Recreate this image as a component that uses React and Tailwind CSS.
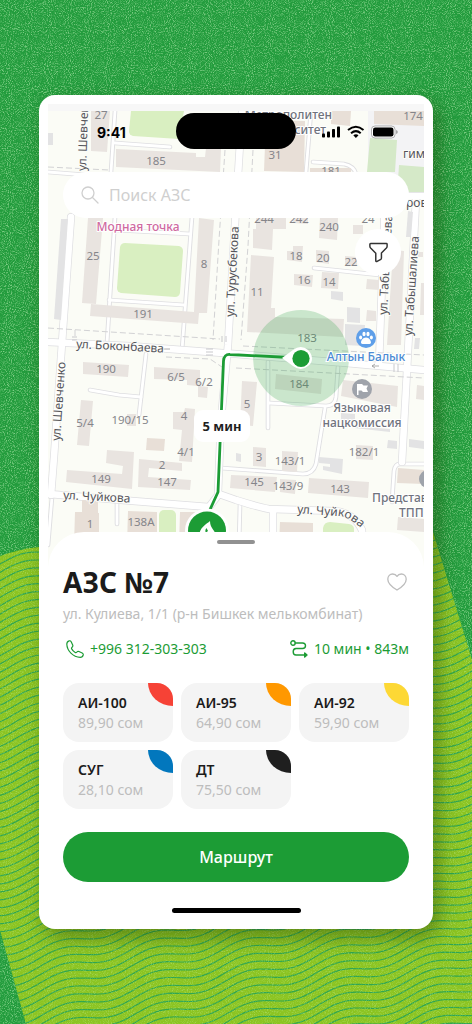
import React from "react";

const fuels = [
  { name: "АИ-100", price: "89,90 сом", color: "bg-[#f64236]" },
  { name: "АИ-95", price: "64,90 сом", color: "bg-[#ff9800]" },
  { name: "АИ-92", price: "59,90 сом", color: "bg-[#fdd835]" },
  { name: "СУГ", price: "28,10 сом", color: "bg-[#0277bd]" },
  { name: "ДТ", price: "75,50 сом", color: "bg-[#1f1f1f]" },
];

// Wavy contour lines of the lime backdrop.
function wave(offset) {
  let d = "";
  for (let x = -4; x <= 476; x += 4) {
    const base = offset - 0.27 * x;
    const shift = 83 + (base - 940) * 0.1;
    const y = base + 4.4 * Math.sin((2 * Math.PI * (x - shift)) / 92);
    d += (x === -4 ? "M" : "L") + x + " " + y.toFixed(1);
  }
  return d;
}
const waves = Array.from({ length: 78 }, (_, i) => wave(548 + i * 8.1));

function Backdrop() {
  return (
    <svg
      className="absolute inset-0 h-full w-full"
      viewBox="0 0 472 1024"
      preserveAspectRatio="xMidYMid slice"
      aria-hidden="true"
    >
      <defs>
        <clipPath id="lime">
          <path d="M0 556Q20 549 39 547L433 532L472 660V1024H26L0 930Z" />
        </clipPath>
        <filter id="grain" x="0" y="0" width="100%" height="100%" colorInterpolationFilters="sRGB">
          <feTurbulence type="fractalNoise" baseFrequency="0.95" numOctaves="2" seed="4" />
          <feColorMatrix values="0 0 0 0 0.85  0 0 0 0 1  0 0 0 0 0.8  3 0 0 0 -1.4" />
        </filter>
      </defs>
      <rect width="472" height="1024" fill="#239c3d" />
      <rect width="472" height="1024" filter="url(#grain)" opacity="0.5" />
      <g clipPath="url(#lime)">
        <rect y="520" width="472" height="504" fill="#8cc421" />
        <g fill="none" stroke="#2fa650" strokeWidth="1.2">
          {waves.map((d, i) => (
            <path key={i} d={d} />
          ))}
        </g>
        <rect y="520" width="472" height="504" filter="url(#grain)" opacity="0.28" />
      </g>
    </svg>
  );
}

const buildings = [
  "91,111 110,111 107,152 91,151",
  "116,149 196,153 196,157 205,157 206,148 221,149 220,172 116,167",
  "88,218 103,218 96,304 82,303",
  "91,304 194,312 199,218 214,220 207,313 199,313 198,324 90,316",
  "83,362 129,365 128,377 83,374",
  "154,367 200,370 200,386 208,387 207,398 198,397 198,386 187,385 187,380 154,379",
  "81,400 93,401 89,446 77,445",
  "127,414 136,414 136,426 127,426",
  "173,412 184,412 185,408 195,409 192,462 179,461 182,430 173,429",
  "107,450 134,452 132,489 66,482 67,470 122,474 123,466 106,463",
  "139,459 182,463 182,471 149,468 148,477 191,480 190,490 138,487",
  "256,218 286,218 286,229 273,229 272,250 253,248 253,229 256,229",
  "293,217 308,217 308,224 293,223",
  "320,217 338,218 337,240 319,238",
  "353,225 363,225 363,234 353,234",
  "293,246 303,246 302,262 287,260 287,251 293,251",
  "251,255 274,257 271,308 275,308 275,317 344,319 343,337 247,332",
  "316,250 329,251 329,264 316,262",
  "345,256 357,257 357,266 345,265",
  "294,274 313,275 312,287 294,285",
  "322,272 339,273 338,289 321,288",
  "367,279 379,280 379,290 366,289",
  "367,310 376,311 376,321 366,321",
  "393,250 404,251 401,345 387,345",
  "276,374 322,379 321,394 275,389",
  "343,380 398,386 397,407 341,396",
  "242,381 257,382 253,426 240,425",
  "356,445 373,446 373,460 356,459",
  "253,447 266,448 266,467 253,466",
  "282,451 298,452 297,472 282,471",
  "231,475 277,477 275,492 230,488",
  "280,479 296,480 295,494 280,492",
  "309,478 369,482 368,498 308,493",
  "398,517 424,519 424,532 397,530",
  "417,385 424,386 424,400 416,399",
  "421,283 424,283 424,315 420,315",
  "418,252 423,252 423,257 418,257",
];
const warmBuildings = [
  "331,111 351,111 350,126 331,124",
  "266,120 305,121 304,172 264,171",
  "374,111 424,111 424,126 374,124",
  "147,438 165,439 164,451 146,450",
  "82,500 98,501 98,513 99,513 99,545 74,545 75,512 82,512",
  "128,511 157,512 157,545 127,545",
  "180,512 195,512 195,545 179,545",
  "310,168 351,168 351,175 310,175",
  "398,468 424,470 424,484 397,483",
  "280,522 313,523 313,545 279,545",
];
const grayBuildings = [
  "48,133 53,133 53,145 48,145",
  "61,219 68,219 61,320 54,319",
  "331,291 343,292 343,301 331,299",
  "347,307 360,308 360,323 347,322",
  "345,324 365,325 364,346 345,345",
  "341,413 355,414 355,422 341,421",
  "354,426 390,429 390,432 354,428",
  "388,440 397,441 397,449 387,448",
  "409,439 424,441 424,449 409,447",
  "319,457 343,459 342,474 323,470 323,466 330,467 330,464 319,463",
  "408,211 413,212 411,237 406,237",
  "415,338 420,338 419,349 414,349",
  "236,453 241,454 241,462 236,461",
];
const minorRoads = [
  "M115 111L111 172",
  "M115 143L170 147",
  "M48 172L112 177",
  "M115 217L107 343",
  "M192 217L182 350",
  "M109 300L184 305",
  "M116 230L190 234",
  "M146 354L139 415",
  "M90 390L119 395L141 397",
  "M117 503V524",
  "M311 111L306 172",
  "M313 162L344 164Q354 166 356 174",
  "M314 268L380 275",
  "M268 362V428",
  "M338 367L336 397Q335 406 326 406L269 403",
  "M325 408L316 464Q313 474 303 474L221 468",
  "M424 464H400Q395 464 394 471L392 502",
  "M240 505L239 545",
  "M52 497L48 545",
];
const majorRoads = [
  "M71 217L62 343L54 457L51 495",
  "M48 342L130 346L236 354L346 363L424 370",
  "M242 111L234 240L228 345L221 420L218 493",
  "M49 494L133 501L209 507L219 494L236 500Q258 507 269 509L335 511Q354 513 362 530L363 545",
  "M385 200L379 365",
  "M416 200L407 370L402 462",
  "M368 196H424",
  "M273 510V545",
];
const houseNumbers = [
  ["27", 101, 119], ["185", 156, 165], ["31", 275, 159], ["174", 413, 120], ["181", 331, 175],
  ["244", 264, 223], ["242", 299, 223], ["240", 329, 231], ["24", 368, 223],
  ["25", 93, 260], ["8", 204, 268], ["11", 257, 296], ["18", 296, 260], ["20", 323, 262],
  ["22", 351, 266], ["16", 304, 284], ["14", 329, 286], ["191", 143, 318], ["183", 307, 342],
  ["184", 299, 388], ["190", 106, 373], ["6/5", 176, 381], ["6/2", 204, 386], ["5/4", 85, 427],
  ["190/15", 130, 424], ["4", 184, 420], ["4/1", 186, 456], ["2", 162, 469], ["149", 101, 483],
  ["147", 167, 486], ["1", 90, 528], ["138А", 141, 526], ["5", 247, 408], ["3", 259, 461],
  ["143/1", 290, 465], ["182/1", 364, 456], ["145", 254, 486], ["143/9", 288, 490], ["143", 340, 493],
];
const streets = [
  ["ул. Шевченко", 86, 171, -88],
  ["ул. Шевченко", 60, 441, -86],
  ["ул. Турусбекова", 234, 317, -87],
  ["ул. Табышалиева", 387, 315, -87],
  ["ул. Табышалиева", 412, 336, -86],
  ["ул. Боконбаева", 76, 348, 3],
  ["ул. Чуйкова", 63, 499, 3],
];

function Roads({ paths, outer, inner }) {
  return (
    <g fill="none" strokeLinecap="round" strokeLinejoin="round">
      {paths.map((d) => (
        <path key={d} d={d} stroke="#dedee1" strokeWidth={outer} />
      ))}
      {paths.map((d) => (
        <path key={d} d={d} stroke="#fff" strokeWidth={inner} />
      ))}
    </g>
  );
}

function CityMap() {
  return (
    <svg
      className="absolute inset-0 h-full w-full"
      viewBox="48 111 376 456"
      preserveAspectRatio="xMidYMid slice"
      role="img"
      aria-label="Карта"
      fontFamily="'Noto Sans', sans-serif"
    >
      <rect x="-400" y="0" width="1300" height="700" fill="#fbfcf6" />
      <path d="M368 111H424V200H368Z" fill="#f3f3f5" />
      <path d="M131 111H184L179 139L133 136Q129 135 129 131Z" fill="#d9efc1" />
      <path d="M370 138L397 140L395 172H367Z" fill="#d5e9c8" />
      <path d="M399 165L424 167V193L404 192L398 180Z" fill="#d5e9c8" />
      <path d="M125 243L179 246Q183 247 183 251L180 293Q179 297 175 297L121 293Q117 292 117 288L120 247Q121 243 125 243Z" fill="#d9efc1" />
      <rect x="159" y="510" width="17" height="35" rx="5" fill="#d9efc1" />
      <path d="M323 545V528Q324 522 330 522L349 524Q355 525 354 531V545Z" fill="#d9efc1" />
      <Roads paths={minorRoads} outer={4.6} inner={2.8} />
      <Roads paths={majorRoads} outer={8} inner={6.6} />
      <g fill="#e9e4e0">{buildings.map((p) => <polygon key={p} points={p} />)}</g>
      <g fill="#e8dfd7">{warmBuildings.map((p) => <polygon key={p} points={p} />)}</g>
      <g fill="#e3e3e4">{grayBuildings.map((p) => <polygon key={p} points={p} />)}</g>
      <g fill="none" stroke="#d2d2d4" strokeWidth="1" strokeDasharray="6 3">
        <path d="M48 167L109 170M48 328L220 339M243 346L424 355M166 357L210 359L222 367M236 368L424 378" />
        <path d="M225 150L219 240L213 340M253 150L248 246L241 340M75 330V338" />
      </g>
      <g stroke="#c9c9cc" strokeWidth="1">
        <path d="M206 349H213M206 352H213M206 355H213M222 336V342M226 336V342M394 364V372M398 364V372M72 337H77M72 340H77" />
      </g>
      <path d="M372 366H379M372 366L375 364M372 366L375 368M170 349H163" stroke="#999" strokeWidth="0.8" fill="none" />

      <g fontSize="11.5" fill="#85858a" textAnchor="middle">
        {houseNumbers.map(([t, x, y]) => (
          <text key={t} x={x} y={y}>{t}</text>
        ))}
      </g>
      <g fontSize="12" fill="#55555b" stroke="#fcfcf8" strokeWidth="2" paintOrder="stroke" strokeLinejoin="round">
        {streets.map(([t, x, y, r]) => (
          <text key={x} transform={`translate(${x} ${y}) rotate(${r})`}>{t}</text>
        ))}
        <path id="chuikova" d="M297 513L338 516Q352 517 366 534" fill="none" stroke="none" />
        <text><textPath href="#chuikova">ул. Чуйкова</textPath></text>
        <text x="406" y="207">ров</text>
        <text x="403" y="158">гим</text>
      </g>
      <g fontSize="12" fontWeight="500" fill="#70737d" stroke="#fff" strokeWidth="2" paintOrder="stroke" strokeLinejoin="round">
        <text x="332" y="119" textAnchor="end">Метрополитен</text>
        <text x="326" y="134" textAnchor="end">университет</text>
        <text x="362" y="412" textAnchor="middle">Языковая</text>
        <text x="362" y="427" textAnchor="middle">нацкомиссия</text>
        <text x="372" y="502">Представ</text>
        <text x="399" y="517">ТПП</text>
        <text x="138" y="231" textAnchor="middle" fill="#cf6a9f">Модная точка</text>
      </g>

      <circle cx="301" cy="358" r="48" fill="#1c9c35" fillOpacity="0.22" />
      <text x="366" y="361" fontSize="12" fontWeight="500" textAnchor="middle" fill="#4c8bd3" stroke="#fff" strokeWidth="2" paintOrder="stroke">Алтын Балык</text>

      <circle cx="366" cy="338" r="10" fill="#5f9fe9" />
      <g fill="#fff">
        <path d="M366 337.5C363 337.5 361 340.5 361 342.5C361 344.5 363.5 344 366 344C368.500 344 371 344.500 371 342.500C371 340.500 369 337.500 366 337.500Z" />
        <ellipse cx="360.600" cy="337.600" rx="1.500" ry="2" />
        <ellipse cx="364" cy="334" rx="1.600" ry="2.200" />
        <ellipse cx="368" cy="334" rx="1.600" ry="2.200" />
        <ellipse cx="371.400" cy="337.600" rx="1.500" ry="2" />
      </g>
      <circle cx="362" cy="389" r="10" fill="#9fa3ab" />
      <path d="M357 384V395H358.500V390.500H361.500L363 392H368L366.500 388.500L368 385.500H363.500L362 384Z" fill="#fff" />
      <circle cx="428" cy="479" r="9" fill="#9fa3ab" />

      <path d="M290 357.500L230 354.500Q224 354 223.500 361L218 492L208 514" fill="none" stroke="#1c9c35" strokeWidth="2.800" />
      <path d="M282 358L293 350Q301 344 308 350Q312 354 312 358.500Q312 363 308 366Q301 372 293 366Z" fill="#fff" />
      <circle cx="301" cy="358.500" r="8.600" fill="#1c9c35" />

      <rect x="194" y="410" width="56" height="32" rx="9" fill="#fff" />
      <text x="222" y="431" fontSize="13" fontWeight="700" textAnchor="middle" fill="#1f1f1f">5 мин</text>

      <circle cx="207" cy="530.500" r="22" fill="#fff" />
      <circle cx="207" cy="530.500" r="19" fill="#1c9c35" />
      <path d="M210 521C207 524 199 527 199 537H216C216 530 210 529 210 521Z" fill="#fff" />
      <path d="M206.500 528Q204.500 530 205.500 533L208 531Z" fill="#1c9c35" />
    </svg>
  );
}

function StatusIcons() {
  return (
    <svg className="h-3.5 w-[76px]" viewBox="0 0 76 14" aria-hidden="true">
      <g>
        <rect x="0" y="8.500" width="3" height="4" rx="0.800" />
        <rect x="5" y="6.500" width="3" height="6" rx="0.800" />
        <rect x="10" y="4" width="3" height="8.500" rx="0.800" />
        <rect x="15" y="1.500" width="3" height="11" rx="0.800" />
      </g>
      <g fill="none" stroke="#000" strokeWidth="2">
        <path d="M26 5Q34 -1.500 41.500 5" />
        <path d="M29 8.200Q34 4 38.700 8.200" />
      </g>
      <path d="M31.300 10.200Q34 8.300 36.500 10.200L33.900 13Z" />
      <rect x="49.500" y="1" width="23.500" height="12" rx="3.500" fill="#fff" stroke="#000" strokeOpacity="0.3" />
      <rect x="51" y="2.500" width="20.500" height="9" rx="2.200" />
      <path d="M74.200 5V9Q75.700 8.500 75.700 7T74.200 5Z" fillOpacity="0.4" />
    </svg>
  );
}

export default function App() {
  return (
    <main className="relative min-h-screen overflow-hidden px-[39px] pb-[95px] pt-[95px] font-['Noto_Sans',sans-serif]">
      <Backdrop />
      <div className="relative rounded-2xl bg-white p-[9px] pb-4 shadow-[6px_8px_20px_rgba(30,60,0,0.45)]">
        <div className="h-[7px] bg-[#f7f7f7]" />

        <section className="relative h-[456px] overflow-hidden" aria-label="Карта заправок">
          <CityMap />
          <div className="relative px-[15px] pt-0.5">
            <div className="grid grid-cols-[1fr_120px_1fr] items-center">
              <span className="pt-1 pl-[34px] font-['Inter',sans-serif] text-sm font-bold text-black">9:41</span>
              <div className="h-9 rounded-full bg-black" />
              <div className="flex justify-end pr-[11px] pt-0.5">
                <StatusIcons />
              </div>
            </div>
            <label className="mt-[23px] flex h-[46px] items-center gap-2.5 rounded-full bg-white px-[18px]">
              <svg className="h-[18px] w-[18px] shrink-0" viewBox="0 0 18 18" fill="none" stroke="#cfcfcf" strokeWidth="1.300" strokeLinecap="round" aria-hidden="true">
                <circle cx="7" cy="7" r="6" />
                <path d="M11.500 11.500L17 17" />
              </svg>
              <input
                type="search"
                aria-label="Поиск АЗС"
                placeholder="Поиск АЗС"
                className="min-w-0 flex-1 bg-transparent text-base outline-none placeholder:text-[#cfcfcf]"
              />
            </label>
            <div className="mt-[11px] flex justify-end pr-2">
              <button type="button" aria-label="Фильтр" className="flex h-[46px] w-[46px] items-center justify-center rounded-full bg-white">
                <svg className="h-[21px] w-[21px]" viewBox="0 0 20 20" fill="none" stroke="#333" strokeWidth="1.400" strokeLinejoin="round" aria-hidden="true">
                  <path d="M2.500 1.500H17.500Q18.200 1.500 18.200 2.200V4Q18.200 5 17.500 5.800L12.800 10.500V15.200Q12.800 16 12.200 16.500L8.600 18.500Q7.400 18.800 7.400 17.500V10.800L2.500 5.800Q1.800 5 1.800 4V2.200Q1.800 1.500 2.500 1.500Z" />
                </svg>
              </button>
            </div>
          </div>
        </section>

        <section className="relative -mt-[35px] rounded-t-[36px] bg-white px-[15px] pt-2">
          <div className="mx-auto h-1 w-[38px] rounded-full bg-[#919191]" />
          <div className="mt-5 flex h-9 items-center justify-between">
            <h1 className="text-[28px] font-bold leading-9 text-[#1b1b1b]">АЗС №7</h1>
            <button type="button" aria-label="В избранное" className="mr-0.5">
              <svg className="h-[18px] w-5" viewBox="0 0 20 18" fill="none" stroke="#bdbdbd" strokeWidth="1.300" strokeLinejoin="round" aria-hidden="true">
                <path d="M10 17C7 15.200 0.800 11.500 0.800 6.200C0.800 3 3 1 5.600 1C7.600 1 9.200 2 10 3.400C10.800 2 12.400 1 14.400 1C17 1 19.200 3 19.200 6.200C19.200 11.500 13 15.200 10 17Z" />
              </svg>
            </button>
          </div>
          <p className="mt-1 whitespace-nowrap text-sm leading-5 text-[#bdbdbd]">
            ул. Кулиева, 1/1 (р-н Бишкек мелькомбинат)
          </p>
          <div className="mt-[15px] flex h-5 items-center justify-between text-sm leading-5 text-[#1c9c35]">
            <a href="tel:+996312303303" className="flex items-center gap-1.5 pl-[3px]">
              <svg className="h-[18px] w-[18px]" viewBox="0 0 18 18" fill="none" stroke="currentColor" strokeWidth="1.200" strokeLinejoin="round" aria-hidden="true">
                <path d="M3.200 0.800Q4.600 0.500 5.300 1.900L6.700 5Q7.200 6.300 6.100 7.200Q5.200 8 5.700 8.900Q7 11.300 9.200 12.500Q10.100 13 10.900 12Q11.700 11 12.900 11.500L16.200 13Q17.500 13.700 17.200 15Q16.600 17.300 14.300 17.300C7 17 1 10.800 0.800 4Q0.900 1.400 3.200 0.800Z" />
              </svg>
              <span>+996 312-303-303</span>
            </a>
            <span className="flex items-center gap-1.5">
              <svg className="h-[18px] w-[18px]" viewBox="0 0 18 18" fill="none" stroke="currentColor" strokeWidth="1.400" strokeLinecap="round" strokeLinejoin="round" aria-hidden="true">
                <circle cx="3" cy="3" r="2.200" />
                <path d="M5.200 3H12.500Q15.500 3.200 15.500 5.800Q15.500 8.500 12.500 8.500H6Q3.200 8.700 3.200 11.800Q3.200 15 6 15H16" />
                <path d="M14.700 13L17 15L14.700 17Z" fill="currentColor" />
              </svg>
              <span>10 мин • 843м</span>
            </span>
          </div>

          <ul className="mt-6 grid grid-cols-3 gap-2">
            {fuels.map((f) => (
              <li key={f.name} className="relative h-[59px] overflow-hidden rounded-2xl bg-[#f4f4f4] pl-[15px] pt-2.5">
                <span className={`absolute right-0 top-0 h-[23px] w-[25px] rounded-bl-[100%] ${f.color}`} />
                <div className="text-sm font-semibold leading-5 text-[#1b1b1b]">{f.name}</div>
                <div className="text-sm leading-5 text-[#bdbdbd]">{f.price}</div>
              </li>
            ))}
          </ul>

          <button type="button" className="mt-[23px] h-[50px] w-full rounded-full bg-[#1c9c35] text-base font-medium text-white">
            Маршрут
          </button>
          <div className="mx-auto mt-[26px] h-[5px] w-[129px] rounded-full bg-black" />
        </section>
      </div>
    </main>
  );
}
